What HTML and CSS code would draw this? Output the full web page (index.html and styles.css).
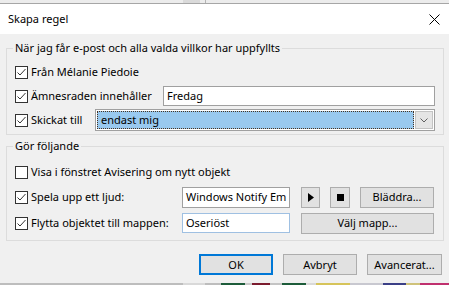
FILE: index.html
```html
<!DOCTYPE html>
<html lang="sv">
<head>
  <meta charset="UTF-8">
  <title>Skapa regel</title>
  <link rel="stylesheet" href="styles.css">
</head>
<body>
  <div class="desk-top">
    <span class="tab"></span>
    <span class="sep"></span>
  </div>

  <div class="dialog">
    <div class="titlebar">
      <span class="title">Skapa regel</span>
      <svg class="close" width="11" height="11" viewBox="0 0 11 11">
        <path d="M0.5 0.5 L10.5 10.5 M10.5 0.5 L0.5 10.5" stroke="#000" stroke-width="1" fill="none"/>
      </svg>
    </div>

    <div class="content">
      <!-- Conditions -->
      <fieldset class="group">
        <legend>När jag får e-post och alla valda villkor har uppfyllts</legend>
        <div class="row">
          <label class="check">
            <span class="box"><svg width="11" height="11" viewBox="0 0 11 11"><path d="M1.5 5.5 L4 8 L9.5 2" fill="none" stroke="#333"/></svg></span>
            Från Mélanie Piedoie
          </label>
        </div>
        <div class="row">
          <label class="check subject">
            <span class="box"><svg width="11" height="11" viewBox="0 0 11 11"><path d="M1.5 5.5 L4 8 L9.5 2" fill="none" stroke="#333"/></svg></span>
            Ämnesraden innehåller
          </label>
          <div class="textbox wide">Fredag</div>
        </div>
        <div class="row">
          <label class="check sent-to">
            <span class="box"><svg width="11" height="11" viewBox="0 0 11 11"><path d="M1.5 5.5 L4 8 L9.5 2" fill="none" stroke="#333"/></svg></span>
            Skickat till
          </label>
          <div class="combo">
            <div class="combo-value">endast mig</div>
            <div class="combo-btn">
              <svg width="8" height="5" viewBox="0 0 8 5"><path d="M0.5 0.5 L4 4 L7.5 0.5" fill="none" stroke="#606060"/></svg>
            </div>
          </div>
        </div>
      </fieldset>

      <!-- Actions -->
      <fieldset class="group second">
        <legend>Gör följande</legend>
        <div class="row">
          <label class="check">
            <span class="box"></span>
            Visa i fönstret Avisering om nytt objekt
          </label>
        </div>
        <div class="row tall">
          <label class="check action">
            <span class="box"><svg width="11" height="11" viewBox="0 0 11 11"><path d="M1.5 5.5 L4 8 L9.5 2" fill="none" stroke="#333"/></svg></span>
            Spela upp ett ljud:
          </label>
          <div class="textbox small sound">Windows Notify Em</div>
          <button class="btn icon play" type="button">
            <svg width="6" height="9" viewBox="0 0 6 9"><path d="M0 0 L6 4.5 L0 9 Z" fill="#000"/></svg>
          </button>
          <button class="btn icon stop" type="button">
            <svg width="7" height="7" viewBox="0 0 7 7"><rect width="7" height="7" fill="#000"/></svg>
          </button>
          <button class="btn browse" type="button">Bläddra...</button>
        </div>
        <div class="row tall">
          <label class="check action">
            <span class="box"><svg width="11" height="11" viewBox="0 0 11 11"><path d="M1.5 5.5 L4 8 L9.5 2" fill="none" stroke="#333"/></svg></span>
            Flytta objektet till mappen:
          </label>
          <div class="textbox small folder">Oseriöst</div>
          <button class="btn pick" type="button">Välj mapp...</button>
        </div>
      </fieldset>

      <div class="actions">
        <button class="btn default" type="button">OK</button>
        <button class="btn" type="button">Avbryt</button>
        <button class="btn advanced" type="button">Avancerat...</button>
      </div>
    </div>
  </div>

  <div class="desk-bottom">
    <span class="s1"></span><span class="s2"></span><span class="s3"></span><span class="s4"></span>
    <span class="s5"></span><span class="s6"></span><span class="s7"></span><span class="s8"></span>
    <span class="s9"></span><span class="s10"></span><span class="s11"></span><span class="s12"></span>
    <span class="s13"></span><span class="s14"></span>
  </div>
</body>
</html>
```

FILE: styles.css
```css
* {
  box-sizing: border-box;
}

html, body {
  margin: 0;
}

body {
  width: 449px;
  height: 285px;
  overflow: hidden;
  font-family: "Noto Sans", sans-serif;
  font-size: 11px;
  line-height: 16px;
  color: #000;
  background: #f0f0f0;
}

/* window behind the dialog */
.desk-top {
  height: 4px;
  display: flex;
  background: #ececec;
  border-bottom: 1px solid #a6a6a6;
}

.desk-top .tab {
  width: 17px;
  height: 3px;
  margin-left: 183px;
  background: #dadada;
}

.desk-top .sep {
  width: 1px;
  height: 3px;
  margin-left: 5px;
  background: #b4b4b4;
}

.desk-bottom {
  height: 2px;
  display: flex;
}

.desk-bottom span {
  height: 2px;
  flex: none;
}

.s1 { width: 183px; background: #bdbdbd; }
.s2 { width: 22px; background: #d9d9d9; }
.s3 { width: 16px; background: #bdbdbd; }
.s4 { width: 24px; background: #1d5c3a; }
.s5 { width: 7px; background: #c9c9c9; }
.s6 { width: 18px; background: #7b1b2e; }
.s7 { width: 12px; background: #c4c4c4; }
.s8 { width: 24px; background: #1d5c3a; }
.s9 { width: 10px; background: #d9d9d9; }
.s10 { width: 34px; background: #d6c45a; }
.s11 { width: 33px; background: #c8c8d0; }
.s12 { width: 23px; background: #3b3f86; }
.s13 { width: 14px; background: #cfc27a; }
.s14 { width: 29px; background: #c0306e; }

/* dialog */
.titlebar {
  height: 30px;
  display: flex;
  align-items: center;
  justify-content: space-between;
  padding: 0 9px 0 8px;
  background: #fff;
}

.content {
  height: 249px;
  display: flex;
  flex-direction: column;
  padding: 6px 5px 8px 6px;
}

.group {
  margin: 0;
  min-width: 0;
  padding: 4px 8px 2px;
  border: 1px solid #dcdcdc;
}

.group legend {
  padding: 0 2px;
  margin-left: -2px;
  line-height: 16px;
}

.group.second {
  margin-top: 3px;
  padding: 6px 8px 4px;
}

.row {
  height: 24px;
  display: flex;
  align-items: center;
}

.row.tall {
  height: 26px;
}

.check {
  flex: none;
  display: flex;
  align-items: center;
}

.check.subject {
  width: 148px;
}

.check.sent-to {
  width: 80px;
}

.check.action {
  width: 167px;
}

.box {
  width: 13px;
  height: 13px;
  margin-right: 3px;
  display: flex;
  border: 1px solid #333;
  background: #fff;
}

.textbox {
  display: flex;
  align-items: center;
  padding: 0 3px;
  white-space: nowrap;
  overflow: hidden;
  border: 1px solid #a0a0a0;
  background: #fff;
}

.textbox.wide {
  flex: 1;
  height: 20px;
}

.textbox.small {
  flex: none;
  width: 108px;
  height: 21px;
}

.textbox.folder {
  height: 20px;
  border-color: #9fc0e2;
}

.combo {
  flex: 1;
  height: 22px;
  display: flex;
  padding: 1px;
  border: 1px solid #a0a0a0;
  background: #fff;
}

.combo-value {
  flex: 1;
  display: flex;
  align-items: center;
  padding-left: 3px;
  background: #99c9ef;
  border: 1px dotted #4a3320;
}

.combo-btn {
  width: 18px;
  margin-left: 1px;
  display: flex;
  align-items: center;
  justify-content: center;
  border: 1px solid #c3c3c3;
  background: #e5e5e5;
}

.btn {
  height: 21px;
  padding: 0;
  display: flex;
  align-items: center;
  justify-content: center;
  font: inherit;
  color: #000;
  border: 1px solid #adadad;
  background: #e1e1e1;
}

.btn.play {
  width: 19px;
  margin-left: 11px;
}

.btn.stop {
  width: 20px;
  margin-left: 10px;
}

.btn.browse {
  width: 74px;
  margin-left: 10px;
}

.btn.pick {
  width: 133px;
  margin-left: 11px;
}

.actions {
  margin-top: 13px;
  margin-right: 2px;
  display: flex;
  justify-content: flex-end;
  gap: 10px;
}

.actions .btn {
  width: 74px;
}

.actions .btn.advanced {
  width: 75px;
}

.btn.default {
  border: 2px solid #0078d7;
}
```
